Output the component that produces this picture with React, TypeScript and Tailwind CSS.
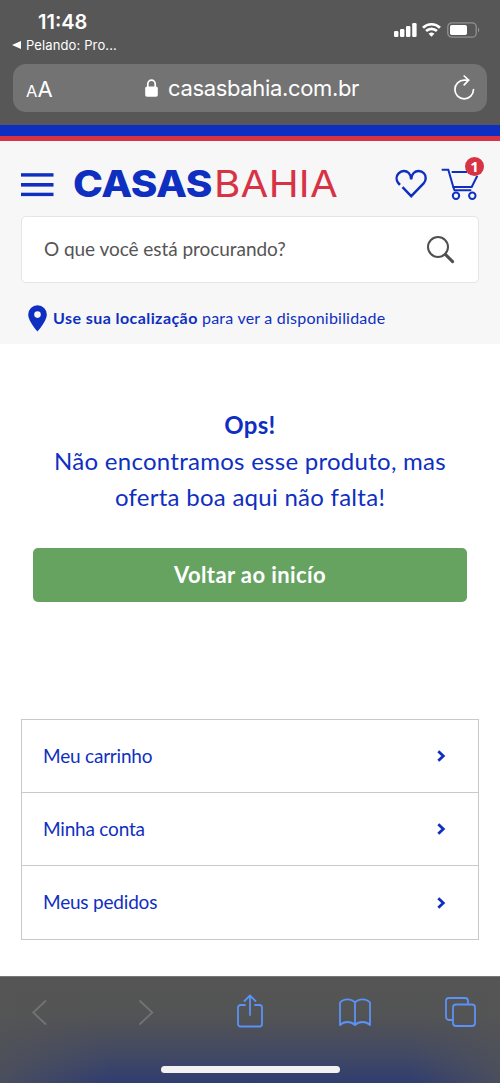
import React from 'react';

const menuItems = ['Meu carrinho', 'Minha conta', 'Meus pedidos'];

function StatusBar() {
  return (
    <div className="flex h-[64px] justify-between pl-3 pr-[20px] text-white">
      <div className="pt-[10px]">
        <div className="pl-[26px] text-[20px] leading-6 font-semibold">11:48</div>
        <div className="flex items-center gap-[5px] text-[13px] leading-[22px] tracking-[0.12px]">
          <svg width="9" height="8" viewBox="0 0 9 8" fill="currentColor">
            <path d="M0 4 9 0v8z" />
          </svg>
          Pelando: Pro...
        </div>
      </div>
      <div className="flex items-start gap-[5px] pt-[22px]">
        <svg width="23" height="15" viewBox="0 0 23 15" fill="currentColor">
          <rect x="0" y="9" width="4.4" height="6" rx="1.2" />
          <rect x="6" y="7" width="4.4" height="8" rx="1.2" />
          <rect x="12" y="4" width="4.4" height="11" rx="1.2" />
          <rect x="18.2" y="1" width="4.4" height="14" rx="1.2" />
        </svg>
        <svg width="19" height="15" viewBox="0 0 19 15" fill="none" stroke="currentColor" strokeWidth="2.7">
          <path d="M1 5.7a12.2 12.2 0 0 1 17 0" />
          <path d="M4.1 9a7.8 7.8 0 0 1 10.8 0" />
          <path d="M9.5 14.7 6.6 11.8a4.2 4.2 0 0 1 5.8 0z" fill="currentColor" stroke="none" />
        </svg>
        <svg width="33" height="16" viewBox="0 0 33 16" fill="none" className="ml-px">
          <rect x="0.8" y="0.8" width="28.4" height="14.4" rx="4" stroke="#919191" strokeWidth="1.3" />
          <rect x="3" y="3" width="17" height="10" rx="1.8" fill="white" />
          <path d="M31 5.5c1.6.8 1.6 4.2 0 5z" fill="#919191" />
        </svg>
      </div>
    </div>
  );
}

function AddressBar() {
  return (
    <div className="mx-[13px] flex h-[48px] items-center rounded-[13px] bg-[#737373] pl-[13px] pr-[12px] text-white">
      <div className="mt-[2px] flex w-[30px] items-baseline leading-none">
        <span className="text-[16.5px]">A</span>
        <span className="text-[22px]">A</span>
      </div>
      <div className="ml-[89px] flex items-center gap-[10px]">
        <svg width="13" height="18" viewBox="0 0 13 18" fill="none" className="-mt-px">
          <rect x="0.2" y="7.5" width="12.6" height="10.3" rx="1.8" fill="white" />
          <path d="M2.8 8V5a3.7 3.9 0 0 1 7.4 0v3" stroke="white" strokeWidth="1.7" />
        </svg>
        <span className="text-[22px] leading-7 tracking-[-0.35px]">casasbahia.com.br</span>
      </div>
      <svg width="22" height="26" viewBox="0 0 22 26" fill="none" stroke="white" strokeWidth="1.7" strokeLinecap="round" strokeLinejoin="round" className="ml-auto">
        <path d="M20.5 14.5a9.3 9.3 0 1 1-9.3-9.3h4.3" />
        <path d="M11.2 1 15.6 5.2 11.2 9.8" />
      </svg>
    </div>
  );
}

function Header() {
  return (
    <header className="h-[203px] bg-[#f7f7f7] px-[21px] pt-[15px]">
      <div className="flex h-[60px] items-start">
        <svg width="33" height="24" viewBox="0 0 33 24" fill="#0f2fc1" className="mt-[17px] shrink-0">
          <rect y="0.2" width="32.5" height="3.4" />
          <rect y="10" width="32.5" height="3.6" />
          <rect y="19.7" width="32.5" height="3.4" />
        </svg>
        <div className="mt-[6px] ml-[19px] flex w-[270px] shrink-0 text-[37px] leading-[44px] whitespace-nowrap">
          <span className="w-[141px] origin-left scale-x-[1.09] font-extrabold tracking-[-0.5px] text-[#0f2fc1]">CASAS</span>
          <span className="origin-left scale-x-[1.09] font-normal tracking-[0.2px] text-[#d83345]">BAHIA</span>
        </div>
        <svg width="33" height="30" viewBox="0 0 33 30" fill="none" stroke="#0f2fc1" strokeWidth="2.4" className="mt-[13px] ml-[52px] shrink-0">
          <path d="M5 15.9 3.2 13.9C1 11 1 7 3.6 4.3 6.6 1.2 11 1.2 13.8 4c1.6 1.7 2.3 3.5 2.4 6.5.1-3 .8-4.8 2.4-6.500C21.400 1.200 26 1.200 28.900 4.300c2.500 2.700 2.400 7.100-.3 10.100L16.200 27.200 7.500 18.200" />
        </svg>
        <div className="relative ml-[13px] h-[44px] w-[44px] shrink-0">
          <svg width="38" height="32" viewBox="0 0 38 32" fill="none" stroke="#0f2fc1" strokeWidth="2" className="mt-[12px]">
            <path d="M.7 1.700H7.300L12.300 19H30.700L36.300 7.700" />
            <path d="M10.700 3.900H26M12.300 19 13.500 22.300H30.300" />
            <circle cx="15" cy="27.700" r="3.200" />
            <circle cx="31.300" cy="27.700" r="3.200" />
          </svg>
          <span className="absolute top-[1px] left-[24px] flex h-[19px] w-[19px] items-center justify-center rounded-full bg-[#d83345] font-['Noto_Sans'] text-[15px] leading-none font-bold text-white">1</span>
        </div>
      </div>
      <div className="flex h-[67px] items-center justify-between rounded-[5px] border border-[#e5e5e5] bg-white pr-[23px] pl-[22px]">
        <span className="font-[Lato] text-[19px] tracking-[-0.05px] text-[#555]">O que você está procurando?</span>
        <svg width="28" height="28" viewBox="0 0 28 28" fill="none" stroke="#4f4f4f" strokeLinecap="round">
          <circle cx="11" cy="11" r="10" strokeWidth="2" />
          <path d="m18.6 18.6 7 7" strokeWidth="3" />
        </svg>
      </div>
      <div className="mt-[21px] flex h-7 items-center pl-[7px] font-[Lato] text-[16px] whitespace-nowrap text-[#0f2fc1]">
        <svg width="19" height="27" viewBox="0 0 19 27" fill="#0f2fc1" className="mr-[6px]">
          <path fillRule="evenodd" d="M9.5.3A9.2 9.2 0 0 0 .2 9.6C.2 16.4 9.5 26.6 9.5 26.6s9.3-10.200 9.300-17A9.200 9.200 0 0 0 9.500.3zm0 6a3.300 3.300 0 1 1 0 6.600 3.300 3.300 0 0 1 0-6.600z" />
        </svg>
        <span className="w-[149px] font-bold tracking-[0.43px]">Use sua localização</span>
        <span className="tracking-[0.22px]">para ver a disponibilidade</span>
      </div>
    </header>
  );
}

function NotFound() {
  return (
    <section className="h-[375px] px-[33px] pt-[63px] text-center font-[Lato] text-[#0f2fc1]">
      <h1 className="text-[24px] leading-9 font-bold tracking-[0.3px]">Ops!</h1>
      <p className="text-[24px] leading-9 tracking-[0.27px]">
        Não encontramos esse produto, mas
        <br />
        oferta boa aqui não falta!
      </p>
      <button className="mt-[33px] h-[54px] w-full rounded-[5px] bg-[#66a361] pb-[2px] text-[22px] font-bold tracking-[0.4px] text-white">
        Voltar ao inicío
      </button>
    </section>
  );
}

function Menu() {
  return (
    <nav className="mx-[21px] h-[257px] font-[Lato] text-[19px] tracking-[-0.2px] text-[#0f2fc1]">
      <div className="divide-y divide-[#c9c9c9] border border-[#c9c9c9]">
        {menuItems.map((item) => (
          <a key={item} className="flex h-[73px] items-center justify-between pr-[32px] pl-[21px]">
            {item}
            <svg width="9" height="12" viewBox="0 0 9 12" fill="none" stroke="currentColor" strokeWidth="2.8">
              <path d="m1.3 1.2 5 4.8-5 4.8" />
            </svg>
          </a>
        ))}
      </div>
    </nav>
  );
}

function Toolbar() {
  return (
    <footer className="h-[107px] border-t border-[#777] bg-[linear-gradient(to_right,#555555b0_0%,#55555500_22%,#55555500_82%,#555555b0_100%),linear-gradient(to_bottom,#555555_0%,#535455_35%,#4b4e5b_55%,#404865_76%,#303d70_100%)]">
      <div className="flex h-[70px] items-center pl-[32px]">
        <svg width="15" height="25" viewBox="0 0 15 25" fill="none" stroke="#737376" strokeWidth="1.8" strokeLinecap="round">
          <path d="M13.5 1 1.2 12.5 13.5 24" />
        </svg>
        <svg width="15" height="25" viewBox="0 0 15 25" fill="none" stroke="#737376" strokeWidth="1.8" strokeLinecap="round" className="ml-[92px]">
          <path d="m1 1 12.3 11.5L1 24" />
        </svg>
        <svg width="26" height="34" viewBox="0 0 26 34" fill="none" stroke="#5b92f5" strokeWidth="1.8" strokeLinecap="round" strokeLinejoin="round" className="-mt-[2px] ml-[83px]">
          <path d="M8 11H3.5A2.5 2.5 0 0 0 1 13.5v16.5a2.5 2.5 0 0 0 2.5 2.5h19a2.5 2.5 0 0 0 2.5-2.5V13.5A2.5 2.5 0 0 0 22.5 11H18" />
          <path d="M13 21V2M7.5 7 13 1.5 18.5 7" />
        </svg>
        <svg width="32" height="28" viewBox="0 0 32 28" fill="none" stroke="#5b92f5" strokeWidth="1.8" strokeLinejoin="round" className="ml-[76px]">
          <path d="M16 4.5C12.5.2 4.5.2 1 4.5V27c4-4 11-4 15 0 4-4 11-4 15 0V4.5c-3.5-4.3-11.5-4.3-15 0zV27" />
        </svg>
        <svg width="31" height="30" viewBox="0 0 31 30" fill="none" stroke="#5b92f5" strokeWidth="1.8" className="ml-[74px]">
          <path d="M8 23H4a3 3 0 0 1-3-3V4a3 3 0 0 1 3-3h16a3 3 0 0 1 3 3v3.5" />
          <rect x="8" y="7.5" width="22" height="21.5" rx="3" />
        </svg>
      </div>
      <div className="mx-auto mt-[19px] h-[7px] w-[179px] rounded-full bg-[#f2f2f2]" />
    </footer>
  );
}

export default function App() {
  return (
    <div className="h-[1083px] w-[500px] overflow-hidden bg-white font-[Inter]">
      <div className="h-[125px] bg-[#575757]">
        <StatusBar />
        <AddressBar />
      </div>
      <div className="h-[16px] border-b-[5px] border-[#d83345] bg-[#0f2fc1]" />
      <Header />
      <NotFound />
      <Menu />
      <Toolbar />
    </div>
  );
}
